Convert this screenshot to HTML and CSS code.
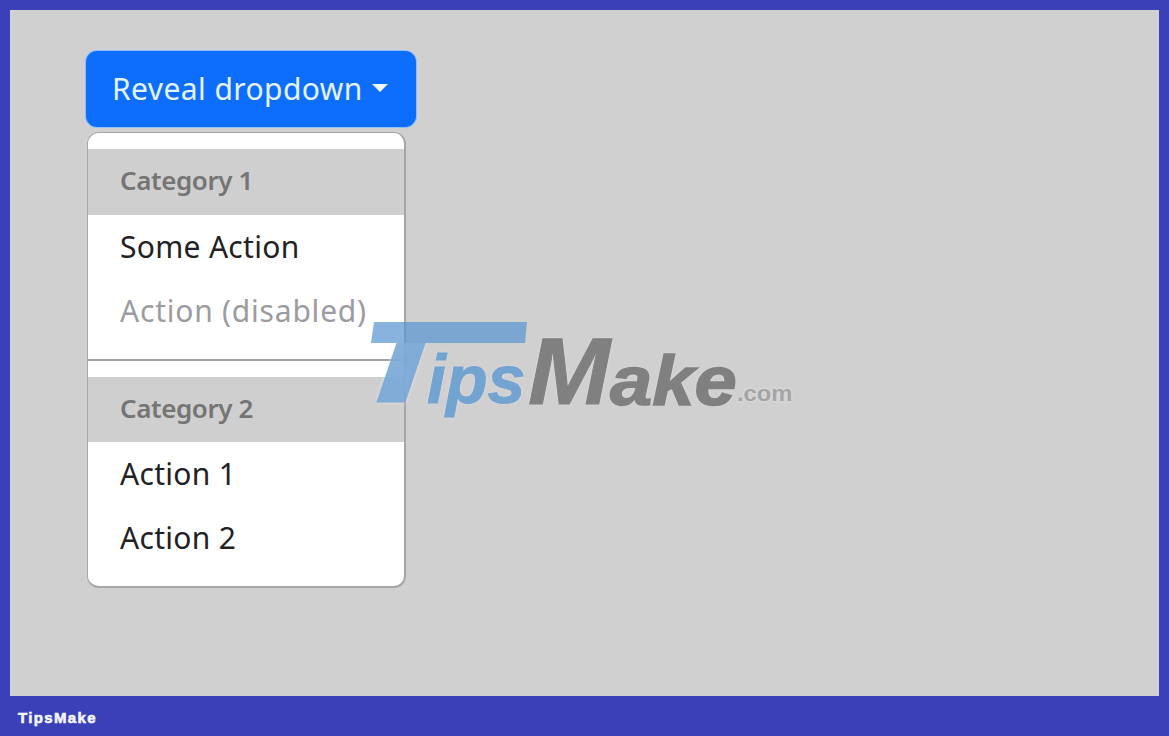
FILE: index.html
```html
<!DOCTYPE html>
<html lang="en">
<head>
<meta charset="utf-8">
<title>Reveal dropdown</title>
<link rel="stylesheet" href="styles.css">
</head>
<body>
<main class="panel">
  <button class="toggle" type="button">Reveal dropdown<span class="caret"></span></button>
  <div class="menu">
    <div class="group">
      <h6 class="header">Category 1</h6>
      <a class="item">Some Action</a>
      <a class="item disabled">Action (disabled)</a>
    </div>
    <hr class="divider">
    <div class="group">
      <h6 class="header">Category 2</h6>
      <a class="item">Action 1</a>
      <a class="item">Action 2</a>
    </div>
  </div>
</main>
<footer class="footer">TipsMake</footer>
<div class="mark">
  <i class="mark-bar"></i>
  <span class="mark-t">T</span>
  <span class="mark-ips">ips</span>
  <span class="mark-m">M</span>
  <span class="mark-ake">ake</span>
  <span class="mark-com">.com</span>
</div>
</body>
</html>
```

FILE: styles.css
```css
* { box-sizing: border-box; }
html, body { margin: 0; height: 100%; }
body {
  width: 1169px;
  height: 736px;
  overflow: hidden;
  background: #3a41b8;
  padding: 10px 10px 0;
  display: flex;
  flex-direction: column;
  position: relative;
  font-family: "Noto Sans", "Open Sans", sans-serif;
}
.panel {
  height: 686px;
  background: #d0d0d0;
  padding: 41px 0 0 76px;
}
.toggle {
  display: flex;
  align-items: center;
  width: 330px;
  height: 76px;
  padding: 0 0 0 26px;
  border: 0;
  border-radius: 11px;
  background: #0d6efd;
  color: #e4f4ff;
  font: 400 30px/1 "Noto Sans", sans-serif;
  letter-spacing: 0.42px;
  box-shadow: 0 0 0 1px #8fbdf5;
}
.caret {
  width: 0;
  height: 0;
  margin-left: 9px;
  border-top: 8px solid #f1f8ff;
  border-left: 8.5px solid transparent;
  border-right: 8.5px solid transparent;
  margin-top: -3px;
}
.menu {
  width: 319px;
  height: 456px;
  margin: 5px 0 0 1px;
  padding: 16px 0 0;
  background: #fff;
  border: 2px solid #a6a6a6;
  border-top-width: 1px;
  border-left-width: 1px;
  border-radius: 12px;
}
.header {
  margin: 0;
  height: 66px;
  padding: 0 0 4px 32px;
  display: flex;
  align-items: center;
  background: #cfcfcf;
  color: #757575;
  font-size: 26px;
  font-weight: 600;
  letter-spacing: -0.4px;
}
.divider + .group .header { height: 65px; }
.item {
  display: flex;
  align-items: center;
  height: 64px;
  padding: 0 0 2px 32px;
  color: #1f2125;
  font-size: 30px;
  letter-spacing: 0.3px;
}
.disabled {
  color: #9a9c9f;
  letter-spacing: 0.78px;
}
.divider {
  height: 0;
  margin: 16px 0 16px;
  border: 0;
  border-top: 2px solid #a3a3a3;
}
.footer {
  height: 40px;
  padding: 14px 0 0 8px;
  color: #f4f6ff;
  font: 700 15px/16px "Liberation Sans", sans-serif;
  -webkit-text-stroke: 0.6px #f4f6ff;
  letter-spacing: 1.35px;
}
.mark {
  position: absolute;
  left: 0;
  top: 0;
  width: 1169px;
  height: 736px;
  pointer-events: none;
  font-family: "Liberation Sans", sans-serif;
  font-weight: 700;
  font-style: italic;
  line-height: 1;
}
.mark-bar {
  position: absolute;
  left: 371px;
  top: 322px;
  width: 156px;
  height: 21px;
  background: rgba(90, 150, 210, 0.72);
  clip-path: polygon(3px 0, 100% 0, 154px 100%, 0 100%);
}
.mark span {
  position: absolute;
  white-space: nowrap;
  text-shadow: 0 0 3px rgba(235, 235, 235, 0.8);
  transform-origin: 0 0;
}
.mark-t {
  left: 340px;
  top: 305px;
  font-size: 115px;
  color: rgba(90, 150, 210, 0.72);
  transform: scaleX(1.75);
  clip-path: inset(38px 0 0 0);
}
.mark-ips {
  left: 427px;
  top: 345px;
  font-size: 68px;
  color: #73a3d1;
  -webkit-text-stroke: 1px #73a3d1;
}
.mark-m {
  left: 528px;
  top: 325px;
  font-size: 94px;
  color: #808080;
  transform: scaleX(1.05);
  -webkit-text-stroke: 1px #808080;
}
.mark-ake {
  left: 610px;
  top: 345px;
  font-size: 71px;
  color: #808080;
  transform: scaleX(1.07);
  -webkit-text-stroke: 1.5px #808080;
}
.mark-com {
  left: 737px;
  top: 383px;
  font-size: 22px;
  color: #a4a4a4;
  font-style: normal;
  transform: scaleX(1.08);
}
```
